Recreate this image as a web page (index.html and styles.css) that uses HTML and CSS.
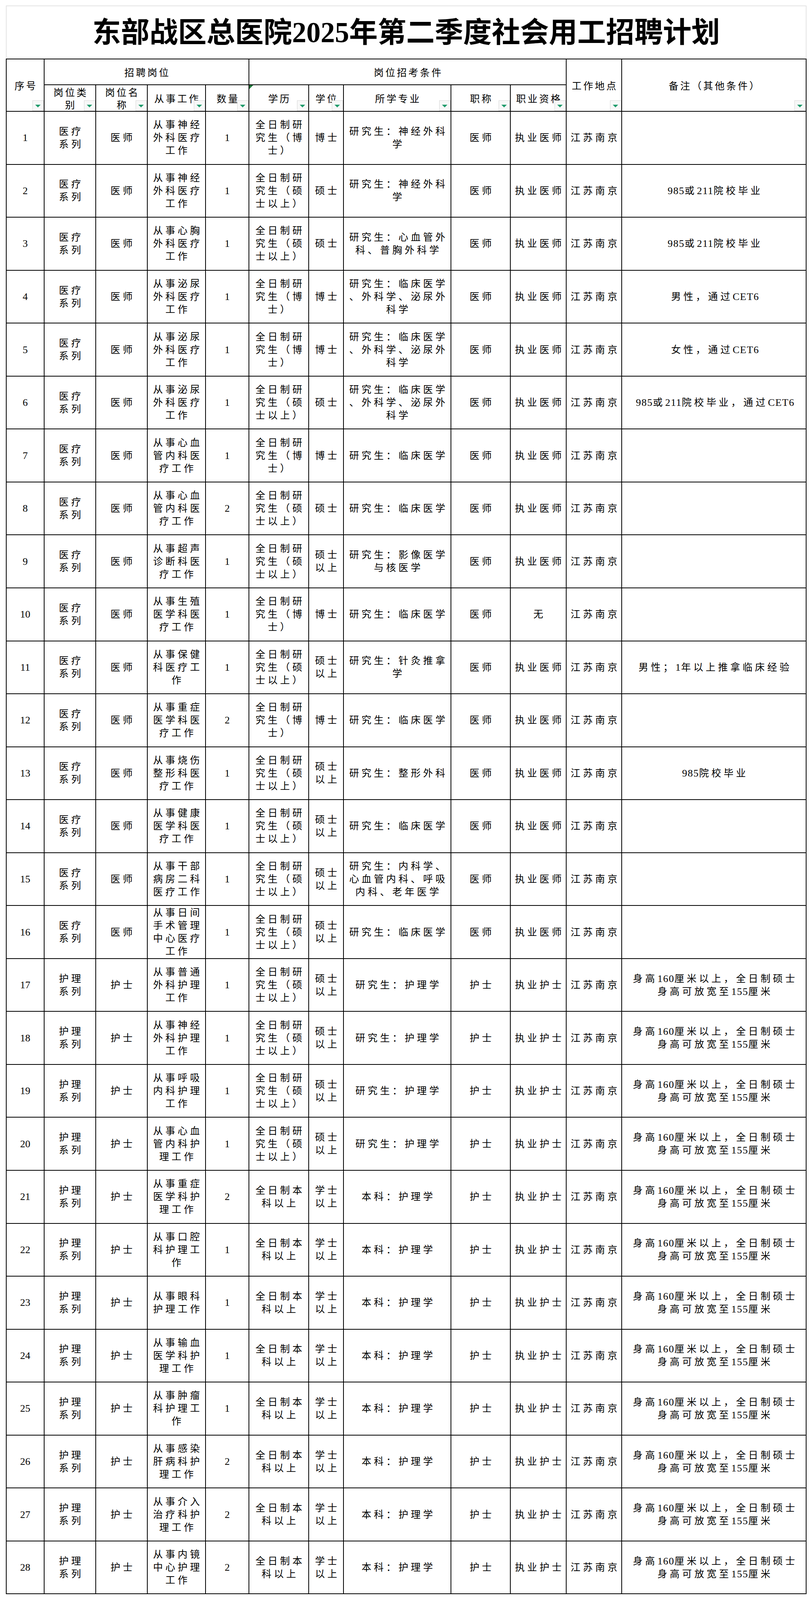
FILE: index.html
```html
<!DOCTYPE html>
<html lang="zh-CN">
<head>
<meta charset="utf-8">
<title>东部战区总医院2025年第二季度社会用工招聘计划</title>
<link rel="stylesheet" href="styles.css">
</head>
<body>
<div class="sheet">
  <div class="title">东部战区总医院2025年第二季度社会用工招聘计划</div>
  <table class="plan">
    <colgroup>
      <col class="w-no"><col class="w-cat"><col class="w-name"><col class="w-work"><col class="w-qty">
      <col class="w-edu"><col class="w-deg"><col class="w-major"><col class="w-title"><col class="w-cert">
      <col class="w-loc"><col class="w-note">
    </colgroup>
    <thead>
      <tr class="h1">
        <th rowspan="2">序号<span class="dd"></span></th>
        <th colspan="4">招聘岗位</th>
        <th colspan="5">岗位招考条件</th>
        <th rowspan="2">工作地点<span class="dd"></span></th>
        <th rowspan="2">备注（其他条件）<span class="dd"></span></th>
      </tr>
      <tr class="h2">
        <th>岗位类<br>别<span class="dd"></span></th>
        <th>岗位名<br>称<span class="dd"></span></th>
        <th>从事工作<span class="dd"></span></th>
        <th>数量<span class="dd"></span></th>
        <th><span class="err"></span>学历<span class="dd"></span></th>
        <th>学位<span class="dd"></span></th>
        <th>所学专业<span class="dd"></span></th>
        <th>职称<span class="dd"></span></th>
        <th>职业资格<span class="dd"></span></th>
      </tr>
    </thead>
    <tbody>
      <tr><td class="num">1</td><td>医疗<br>系列</td><td>医师</td><td>从事神经外科医疗工作</td><td class="num">1</td><td>全日制研究生（博士）</td><td>博士</td><td>研究生：神经外科学</td><td>医师</td><td>执业医师</td><td>江苏南京</td><td></td></tr>
      <tr><td class="num">2</td><td>医疗<br>系列</td><td>医师</td><td>从事神经外科医疗工作</td><td class="num">1</td><td>全日制研究生（硕士以上）</td><td>硕士</td><td>研究生：神经外科学</td><td>医师</td><td>执业医师</td><td>江苏南京</td><td><span class="n">985</span>或<span class="n">211</span>院校毕业</td></tr>
      <tr><td class="num">3</td><td>医疗<br>系列</td><td>医师</td><td>从事心胸外科医疗工作</td><td class="num">1</td><td>全日制研究生（硕士以上）</td><td>硕士</td><td>研究生：心血管外科、普胸外科学</td><td>医师</td><td>执业医师</td><td>江苏南京</td><td><span class="n">985</span>或<span class="n">211</span>院校毕业</td></tr>
      <tr><td class="num">4</td><td>医疗<br>系列</td><td>医师</td><td>从事泌尿外科医疗工作</td><td class="num">1</td><td>全日制研究生（博士）</td><td>博士</td><td>研究生：临床医学、外科学、泌尿外科学</td><td>医师</td><td>执业医师</td><td>江苏南京</td><td>男性，通过<span class="n">CET6</span></td></tr>
      <tr><td class="num">5</td><td>医疗<br>系列</td><td>医师</td><td>从事泌尿外科医疗工作</td><td class="num">1</td><td>全日制研究生（博士）</td><td>博士</td><td>研究生：临床医学、外科学、泌尿外科学</td><td>医师</td><td>执业医师</td><td>江苏南京</td><td>女性，通过<span class="n">CET6</span></td></tr>
      <tr><td class="num">6</td><td>医疗<br>系列</td><td>医师</td><td>从事泌尿外科医疗工作</td><td class="num">1</td><td>全日制研究生（硕士以上）</td><td>硕士</td><td>研究生：临床医学、外科学、泌尿外科学</td><td>医师</td><td>执业医师</td><td>江苏南京</td><td><span class="n">985</span>或<span class="n">211</span>院校毕业，通过<span class="n">CET6</span></td></tr>
      <tr><td class="num">7</td><td>医疗<br>系列</td><td>医师</td><td>从事心血管内科医疗工作</td><td class="num">1</td><td>全日制研究生（博士）</td><td>博士</td><td>研究生：临床医学</td><td>医师</td><td>执业医师</td><td>江苏南京</td><td></td></tr>
      <tr><td class="num">8</td><td>医疗<br>系列</td><td>医师</td><td>从事心血管内科医疗工作</td><td class="num">2</td><td>全日制研究生（硕士以上）</td><td>硕士</td><td>研究生：临床医学</td><td>医师</td><td>执业医师</td><td>江苏南京</td><td></td></tr>
      <tr><td class="num">9</td><td>医疗<br>系列</td><td>医师</td><td>从事超声诊断科医疗工作</td><td class="num">1</td><td>全日制研究生（硕士以上）</td><td>硕士以上</td><td>研究生：影像医学与核医学</td><td>医师</td><td>执业医师</td><td>江苏南京</td><td></td></tr>
      <tr><td class="num">10</td><td>医疗<br>系列</td><td>医师</td><td>从事生殖医学科医疗工作</td><td class="num">1</td><td>全日制研究生（博士）</td><td>博士</td><td>研究生：临床医学</td><td>医师</td><td>无</td><td>江苏南京</td><td></td></tr>
      <tr><td class="num">11</td><td>医疗<br>系列</td><td>医师</td><td>从事保健科医疗工作</td><td class="num">1</td><td>全日制研究生（硕士以上）</td><td>硕士以上</td><td>研究生：针灸推拿学</td><td>医师</td><td>执业医师</td><td>江苏南京</td><td>男性；<span class="n">1</span>年以上推拿临床经验</td></tr>
      <tr><td class="num">12</td><td>医疗<br>系列</td><td>医师</td><td>从事重症医学科医疗工作</td><td class="num">2</td><td>全日制研究生（博士）</td><td>博士</td><td>研究生：临床医学</td><td>医师</td><td>执业医师</td><td>江苏南京</td><td></td></tr>
      <tr><td class="num">13</td><td>医疗<br>系列</td><td>医师</td><td>从事烧伤整形科医疗工作</td><td class="num">1</td><td>全日制研究生（硕士以上）</td><td>硕士以上</td><td>研究生：整形外科</td><td>医师</td><td>执业医师</td><td>江苏南京</td><td><span class="n">985</span>院校毕业</td></tr>
      <tr><td class="num">14</td><td>医疗<br>系列</td><td>医师</td><td>从事健康医学科医疗工作</td><td class="num">1</td><td>全日制研究生（硕士以上）</td><td>硕士以上</td><td>研究生：临床医学</td><td>医师</td><td>执业医师</td><td>江苏南京</td><td></td></tr>
      <tr><td class="num">15</td><td>医疗<br>系列</td><td>医师</td><td>从事干部病房二科医疗工作</td><td class="num">1</td><td>全日制研究生（硕士以上）</td><td>硕士以上</td><td>研究生：内科学、心血管内科、呼吸内科、老年医学</td><td>医师</td><td>执业医师</td><td>江苏南京</td><td></td></tr>
      <tr><td class="num">16</td><td>医疗<br>系列</td><td>医师</td><td>从事日间手术管理中心医疗工作</td><td class="num">1</td><td>全日制研究生（硕士以上）</td><td>硕士以上</td><td>研究生：临床医学</td><td>医师</td><td>执业医师</td><td>江苏南京</td><td></td></tr>
      <tr><td class="num">17</td><td>护理<br>系列</td><td>护士</td><td>从事普通外科护理工作</td><td class="num">1</td><td>全日制研究生（硕士以上）</td><td>硕士以上</td><td>研究生：护理学</td><td>护士</td><td>执业护士</td><td>江苏南京</td><td>身高<span class="n">160</span>厘米以上，全日制硕士<br>身高可放宽至<span class="n">155</span>厘米</td></tr>
      <tr><td class="num">18</td><td>护理<br>系列</td><td>护士</td><td>从事神经外科护理工作</td><td class="num">1</td><td>全日制研究生（硕士以上）</td><td>硕士以上</td><td>研究生：护理学</td><td>护士</td><td>执业护士</td><td>江苏南京</td><td>身高<span class="n">160</span>厘米以上，全日制硕士<br>身高可放宽至<span class="n">155</span>厘米</td></tr>
      <tr><td class="num">19</td><td>护理<br>系列</td><td>护士</td><td>从事呼吸内科护理工作</td><td class="num">1</td><td>全日制研究生（硕士以上）</td><td>硕士以上</td><td>研究生：护理学</td><td>护士</td><td>执业护士</td><td>江苏南京</td><td>身高<span class="n">160</span>厘米以上，全日制硕士<br>身高可放宽至<span class="n">155</span>厘米</td></tr>
      <tr><td class="num">20</td><td>护理<br>系列</td><td>护士</td><td>从事心血管内科护理工作</td><td class="num">1</td><td>全日制研究生（硕士以上）</td><td>硕士以上</td><td>研究生：护理学</td><td>护士</td><td>执业护士</td><td>江苏南京</td><td>身高<span class="n">160</span>厘米以上，全日制硕士<br>身高可放宽至<span class="n">155</span>厘米</td></tr>
      <tr><td class="num">21</td><td>护理<br>系列</td><td>护士</td><td>从事重症医学科护理工作</td><td class="num">2</td><td>全日制本科以上</td><td>学士以上</td><td>本科：护理学</td><td>护士</td><td>执业护士</td><td>江苏南京</td><td>身高<span class="n">160</span>厘米以上，全日制硕士<br>身高可放宽至<span class="n">155</span>厘米</td></tr>
      <tr><td class="num">22</td><td>护理<br>系列</td><td>护士</td><td>从事口腔科护理工作</td><td class="num">1</td><td>全日制本科以上</td><td>学士以上</td><td>本科：护理学</td><td>护士</td><td>执业护士</td><td>江苏南京</td><td>身高<span class="n">160</span>厘米以上，全日制硕士<br>身高可放宽至<span class="n">155</span>厘米</td></tr>
      <tr><td class="num">23</td><td>护理<br>系列</td><td>护士</td><td>从事眼科护理工作</td><td class="num">1</td><td>全日制本科以上</td><td>学士以上</td><td>本科：护理学</td><td>护士</td><td>执业护士</td><td>江苏南京</td><td>身高<span class="n">160</span>厘米以上，全日制硕士<br>身高可放宽至<span class="n">155</span>厘米</td></tr>
      <tr><td class="num">24</td><td>护理<br>系列</td><td>护士</td><td>从事输血医学科护理工作</td><td class="num">1</td><td>全日制本科以上</td><td>学士以上</td><td>本科：护理学</td><td>护士</td><td>执业护士</td><td>江苏南京</td><td>身高<span class="n">160</span>厘米以上，全日制硕士<br>身高可放宽至<span class="n">155</span>厘米</td></tr>
      <tr><td class="num">25</td><td>护理<br>系列</td><td>护士</td><td>从事肿瘤科护理工作</td><td class="num">1</td><td>全日制本科以上</td><td>学士以上</td><td>本科：护理学</td><td>护士</td><td>执业护士</td><td>江苏南京</td><td>身高<span class="n">160</span>厘米以上，全日制硕士<br>身高可放宽至<span class="n">155</span>厘米</td></tr>
      <tr><td class="num">26</td><td>护理<br>系列</td><td>护士</td><td>从事感染肝病科护理工作</td><td class="num">2</td><td>全日制本科以上</td><td>学士以上</td><td>本科：护理学</td><td>护士</td><td>执业护士</td><td>江苏南京</td><td>身高<span class="n">160</span>厘米以上，全日制硕士<br>身高可放宽至<span class="n">155</span>厘米</td></tr>
      <tr><td class="num">27</td><td>护理<br>系列</td><td>护士</td><td>从事介入治疗科护理工作</td><td class="num">2</td><td>全日制本科以上</td><td>学士以上</td><td>本科：护理学</td><td>护士</td><td>执业护士</td><td>江苏南京</td><td>身高<span class="n">160</span>厘米以上，全日制硕士<br>身高可放宽至<span class="n">155</span>厘米</td></tr>
      <tr><td class="num">28</td><td>护理<br>系列</td><td>护士</td><td>从事内镜中心护理工作</td><td class="num">2</td><td>全日制本科以上</td><td>学士以上</td><td>本科：护理学</td><td>护士</td><td>执业护士</td><td>江苏南京</td><td>身高<span class="n">160</span>厘米以上，全日制硕士<br>身高可放宽至<span class="n">155</span>厘米</td></tr>
    </tbody>
  </table>
</div>
</body>
</html>
```

FILE: styles.css
```css
html, body {
  margin: 0;
  padding: 0;
  background: #ffffff;
}

.sheet {
  padding: 14px 0 0 15px;
  width: 2049px;
}

.title {
  box-sizing: border-box;
  width: 2049px;
  height: 135.5px;
  border: 2px solid #e4e4e4;
  border-bottom: none;
  display: flex;
  align-items: center;
  justify-content: center;
  font-family: "Liberation Serif", "Noto Sans CJK SC", serif;
  font-weight: bold;
  font-size: 73px;
  line-height: 1;
  color: #000;
  padding-top: 2px;
}

.plan {
  border-collapse: collapse;
  table-layout: fixed;
  width: 2049px;
  font-family: "Liberation Serif", "Noto Sans CJK SC", serif;
  font-size: 25px;
  color: #000;
}

.w-no { width: 97px; }
.w-cat { width: 132px; }
.w-name { width: 132px; }
.w-work { width: 149px; }
.w-qty { width: 111px; }
.w-edu { width: 153px; }
.w-deg { width: 89px; }
.w-major { width: 275px; }
.w-title { width: 152px; }
.w-cert { width: 143px; }
.w-loc { width: 142px; }
.w-note { width: 472px; }

.plan th,
.plan td {
  border: 2px solid #000;
  text-align: center;
  vertical-align: middle;
  overflow: hidden;
  line-break: anywhere;
  word-break: break-all;
}

.plan th {
  position: relative;
  font-family: "Noto Sans CJK SC", sans-serif;
  font-weight: normal;
  font-size: 25px;
  line-height: 32px;
  letter-spacing: 4.5px;
  padding: 0 1px 0 5.5px;
}

.plan tr.h1 { height: 66.8px; }
.plan tr.h2 { height: 67.8px; }
.plan tbody tr { height: 135.55px; }

.plan td {
  padding: 0 2px 0 8.5px;
  line-height: 33px;
  letter-spacing: 6.5px;
}

.plan td.num {
  letter-spacing: 0;
  padding: 0 4px;
  font-size: 26px;
}

.plan td .n {
  letter-spacing: 1.5px;
  font-size: 26px;
}

/* autofilter dropdown button */
.dd {
  position: absolute;
  right: 0;
  bottom: 0;
  box-sizing: border-box;
  width: 29px;
  height: 27px;
  border: 1px solid #d6d6d6;
  background: #f8f8f8;
}

.dd::after {
  content: "";
  position: absolute;
  left: 6px;
  top: 10px;
  width: 0;
  height: 0;
  border-top: 7px solid #1f9b6b;
  border-left: 7px solid transparent;
  border-right: 7px solid transparent;
}

/* green error indicator in the cell corner */
.err {
  position: absolute;
  left: 0;
  top: 0;
  width: 0;
  height: 0;
  border-top: 10px solid #1e7a3c;
  border-right: 10px solid transparent;
}
```
